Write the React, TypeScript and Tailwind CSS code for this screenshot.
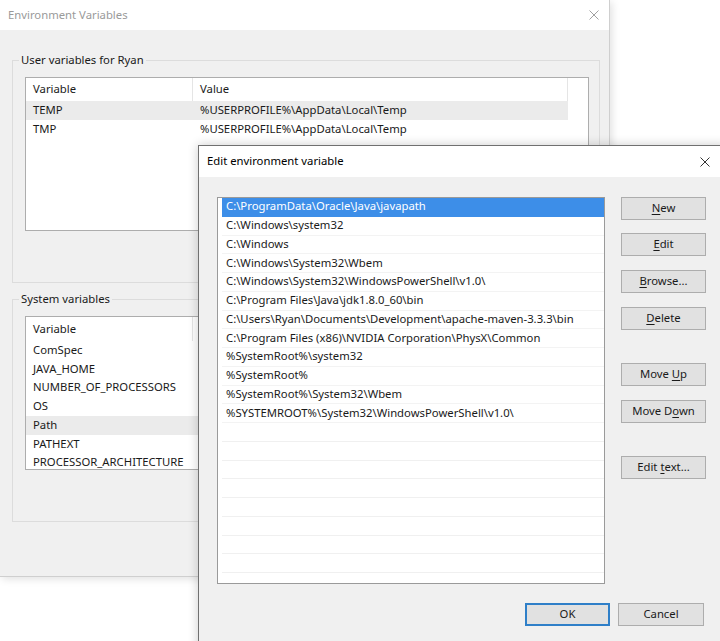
import React from 'react';

const USER_VARS = [
  { name: 'TEMP', value: '%USERPROFILE%\\AppData\\Local\\Temp', active: true },
  { name: 'TMP', value: '%USERPROFILE%\\AppData\\Local\\Temp', active: false },
];

const SYSTEM_VARS = [
  'ComSpec',
  'JAVA_HOME',
  'NUMBER_OF_PROCESSORS',
  'OS',
  'Path',
  'PATHEXT',
  'PROCESSOR_ARCHITECTURE',
];

const PATHS = [
  'C:\\ProgramData\\Oracle\\Java\\javapath',
  'C:\\Windows\\system32',
  'C:\\Windows',
  'C:\\Windows\\System32\\Wbem',
  'C:\\Windows\\System32\\WindowsPowerShell\\v1.0\\',
  'C:\\Program Files\\Java\\jdk1.8.0_60\\bin',
  'C:\\Users\\Ryan\\Documents\\Development\\apache-maven-3.3.3\\bin',
  'C:\\Program Files (x86)\\NVIDIA Corporation\\PhysX\\Common',
  '%SystemRoot%\\system32',
  '%SystemRoot%',
  '%SystemRoot%\\System32\\Wbem',
  '%SYSTEMROOT%\\System32\\WindowsPowerShell\\v1.0\\',
];

const EMPTY_ROWS = 9;

function CloseIcon({ color }: { color: string }) {
  return (
    <svg width="10" height="10" viewBox="0 0 10 10" aria-hidden>
      <path d="M0.5 0.5 L9.5 9.5 M9.5 0.5 L0.5 9.5" stroke={color} strokeWidth="1" fill="none" />
    </svg>
  );
}

function GroupBox({ label, children, className = '' }: { label: string; children: React.ReactNode; className?: string }) {
  return (
    <div className={`relative w-[588px] h-[223px] border border-[#dcdcdc] ${className}`}>
      <span className="absolute left-[6px] -top-[9px] px-[2px] bg-[#f0f0f0] leading-[16px] text-[#1a1a1a]">
        {label}
      </span>
      {children}
    </div>
  );
}

function Btn({ children, primary = false, className = '' }: { children: React.ReactNode; primary?: boolean; className?: string }) {
  return (
    <div
      className={`h-[23px] flex items-center justify-center bg-[#e1e1e1] text-[#1a1a1a] ${
        primary ? 'border-2 border-[#2f7fc8]' : 'border border-[#adadad]'
      } ${className}`}
    >
      <span className="whitespace-pre">{children}</span>
    </div>
  );
}

function Key({ children }: { children: React.ReactNode }) {
  return <span className="underline underline-offset-2">{children}</span>;
}

export default function App() {
  return (
    <div className="relative w-[720px] h-[641px] overflow-hidden bg-white text-[11.3px] font-[family-name:'Noto_Sans',sans-serif]">
      {/* Environment Variables (inactive, behind) */}
      <div className="absolute left-0 top-0 w-[610px] h-[577px] flex flex-col border-r border-b border-[#cfcfcf] shadow-[2px_2px_8px_rgba(0,0,0,0.12)]">
        <div className="h-[30px] shrink-0 bg-white flex items-center justify-between pl-[8px] pr-[10px]">
          <span className="text-[#9a9a9a]">Environment Variables</span>
          <CloseIcon color="#a0a0a0" />
        </div>
        <div className="flex-1 bg-[#f0f0f0] pl-[12px] pt-[30px]">
          <GroupBox label="User variables for Ryan">
            <div className="ml-[12px] mt-[16px] w-[564px] h-[154px] bg-white border border-[#adadad]">
              <div className="flex h-[23px] items-center text-[#1a1a1a]">
                <div className="w-[167px] h-full flex items-center pl-[7px] border-r border-[#e5e5e5]">Variable</div>
                <div className="w-[375px] h-full flex items-center pl-[7px] border-r border-[#e5e5e5]">Value</div>
              </div>
              {USER_VARS.map((v) => (
                <div
                  key={v.name}
                  className={`flex w-[542px] h-[19px] items-center text-[#1a1a1a] ${v.active ? 'bg-[#ebebeb]' : ''}`}
                >
                  <div className="w-[167px] pl-[7px]">{v.name}</div>
                  <div className="pl-[7px]">{v.value}</div>
                </div>
              ))}
            </div>
          </GroupBox>
          <GroupBox label="System variables" className="mt-[16px]">
            <div className="ml-[12px] mt-[16px] w-[564px] h-[154px] bg-white border border-[#adadad] overflow-hidden">
              <div className="flex h-[24px] items-center text-[#1a1a1a]">
                <div className="w-[167px] h-full flex items-center pl-[7px] border-r border-[#e5e5e5]">Variable</div>
                <div className="pl-[7px]">Value</div>
              </div>
              {SYSTEM_VARS.map((n) => (
                <div
                  key={n}
                  className={`flex w-[542px] h-[18.75px] items-center text-[#1a1a1a] ${n === 'Path' ? 'bg-[#ebebeb]' : ''}`}
                >
                  <div className="w-[167px] pl-[7px] whitespace-nowrap">{n}</div>
                </div>
              ))}
            </div>
          </GroupBox>
        </div>
      </div>

      {/* Edit environment variable (active, front) */}
      <div className="absolute left-[198px] top-[145px] w-[530px] h-[510px] flex flex-col border-l border-t border-[#707070] shadow-[0_0_10px_rgba(0,0,0,0.2)]">
        <div className="h-[31px] shrink-0 bg-white flex items-center justify-between pl-[8px] pr-[18px]">
          <span className="text-black">Edit environment variable</span>
          <CloseIcon color="#333333" />
        </div>
        <div className="flex-1 bg-[#f0f0f0] pl-[18px] pt-[20px]">
          <div className="flex">
            <div className="w-[388px] h-[387px] bg-white border border-[#9a9a9a] overflow-hidden">
              {PATHS.map((p, i) => (
                <div
                  key={p}
                  className={`h-[18.75px] flex items-center ml-[4px] pl-[4px] whitespace-nowrap border-b ${
                    i === 0 ? 'bg-[#3d8ee8] text-white border-[#3d8ee8]' : 'text-[#1a1a1a] border-[#f3f3f3]'
                  }`}
                >
                  {p}
                </div>
              ))}
              {Array.from({ length: EMPTY_ROWS }).map((_, i) => (
                <div key={i} className="h-[18.75px] ml-[4px] border-b border-[#f0f0f0]" />
              ))}
            </div>
            <div className="ml-[16px] w-[85px] flex flex-col">
              <Btn><Key>N</Key>ew</Btn>
              <Btn className="mt-[13px]"><Key>E</Key>dit</Btn>
              <Btn className="mt-[14px]"><Key>B</Key>rowse...</Btn>
              <Btn className="mt-[14px]"><Key>D</Key>elete</Btn>
              <Btn className="mt-[33px]">Move <Key>U</Key>p</Btn>
              <Btn className="mt-[14px]">Move D<Key>o</Key>wn</Btn>
              <Btn className="mt-[33px]">Edit <Key>t</Key>ext...</Btn>
            </div>
          </div>
          <div className="flex mt-[19px] pl-[308px] gap-[8px]">
            <Btn primary className="w-[85px]">OK</Btn>
            <Btn className="w-[86px]">Cancel</Btn>
          </div>
        </div>
      </div>
    </div>
  );
}
